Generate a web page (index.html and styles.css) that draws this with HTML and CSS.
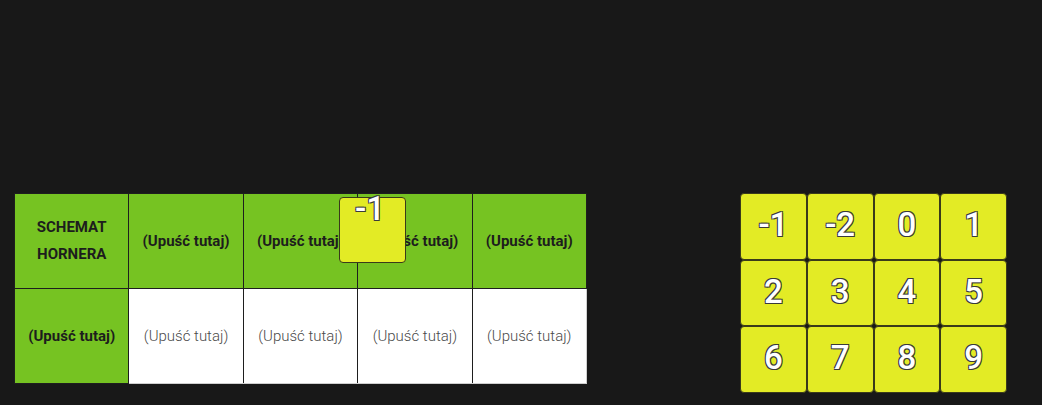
FILE: index.html
```html
<!DOCTYPE html>
<html lang="pl">
<head>
    <meta charset="UTF-8">
    <meta name="viewport" content="width=device-width, initial-scale=1.0">
    <title>Schemat Hornera</title>
    <link rel="stylesheet" href="styles.css">
</head>
<body>
    <div class="app">
        <table class="horner">
            <tr class="head-row">
                <th class="title">SCHEMAT<br>HORNERA</th>
                <td class="drop head">(Upuść tutaj)</td>
                <td class="drop head">(Upuść tutaj)</td>
                <td class="drop head">(Upuść tutaj)</td>
                <td class="drop head">(Upuść tutaj)</td>
            </tr>
            <tr class="body-row">
                <td class="drop head">(Upuść tutaj)</td>
                <td class="drop empty">(Upuść tutaj)</td>
                <td class="drop empty">(Upuść tutaj)</td>
                <td class="drop empty hover">(Upuść tutaj)</td>
                <td class="drop empty last">(Upuść tutaj)</td>
            </tr>
        </table>

        <div class="tiles">
            <div class="tile">-1</div>
            <div class="tile">-2</div>
            <div class="tile">0</div>
            <div class="tile">1</div>
            <div class="tile">2</div>
            <div class="tile">3</div>
            <div class="tile">4</div>
            <div class="tile">5</div>
            <div class="tile">6</div>
            <div class="tile">7</div>
            <div class="tile">8</div>
            <div class="tile">9</div>
        </div>

        <!-- tile being dragged -->
        <div class="tile dragging">-1</div>
    </div>
</body>
</html>
```

FILE: styles.css
```css
* {
    box-sizing: border-box;
}

body {
    margin: 0;
    background: #ffffff;
    font-family: Roboto, "Liberation Sans", sans-serif;
}

.app {
    position: relative;
    width: 1042px;
    height: 405px;
    background: #181818;
    display: flex;
    justify-content: space-between;
    align-items: flex-start;
    padding: 193px 35px 0 14px;
}

.horner {
    border-collapse: collapse;
    table-layout: fixed;
    width: 573px;
}

.horner th,
.horner td {
    height: 95px;
    padding: 0 4px;
    border: 1px solid #1e1e1e;
    text-align: center;
    vertical-align: middle;
}

.title,
.head {
    background: #76c322;
    color: #1d1d1d;
    font-size: 15px;
    font-weight: 700;
    line-height: 27px;
}

.empty {
    background: #ffffff;
    color: #4a4a4a;
    font-size: 15px;
    font-weight: 300;
    border-bottom-color: #cfcfcf !important;
}

.empty.hover {
    border-left-color: #8a8a8a !important;
}

.empty.last {
    border-right-color: #cfcfcf !important;
}

.tiles {
    display: grid;
    grid-template-columns: repeat(4, 66.75px);
    grid-auto-rows: 66.7px;
}

.tile {
    background: #e3eb25;
    border: 1px solid #3a3a1a;
    border-radius: 4px;
    display: flex;
    align-items: center;
    justify-content: center;
    color: #ffffff;
    font-size: 33px;
    font-weight: 500;
    line-height: 33px;
    padding-bottom: 4px;
    text-shadow:
        -1px -1px 0 #3a3a3a, 1px -1px 0 #3a3a3a,
        -1px 1px 0 #3a3a3a, 1px 1px 0 #3a3a3a;
}

.tile.dragging {
    position: absolute;
    left: 339px;
    top: 197px;
    width: 67px;
    height: 66px;
    align-items: flex-start;
    padding: 0 5px 0 0;
    line-height: 22px;
}
```
